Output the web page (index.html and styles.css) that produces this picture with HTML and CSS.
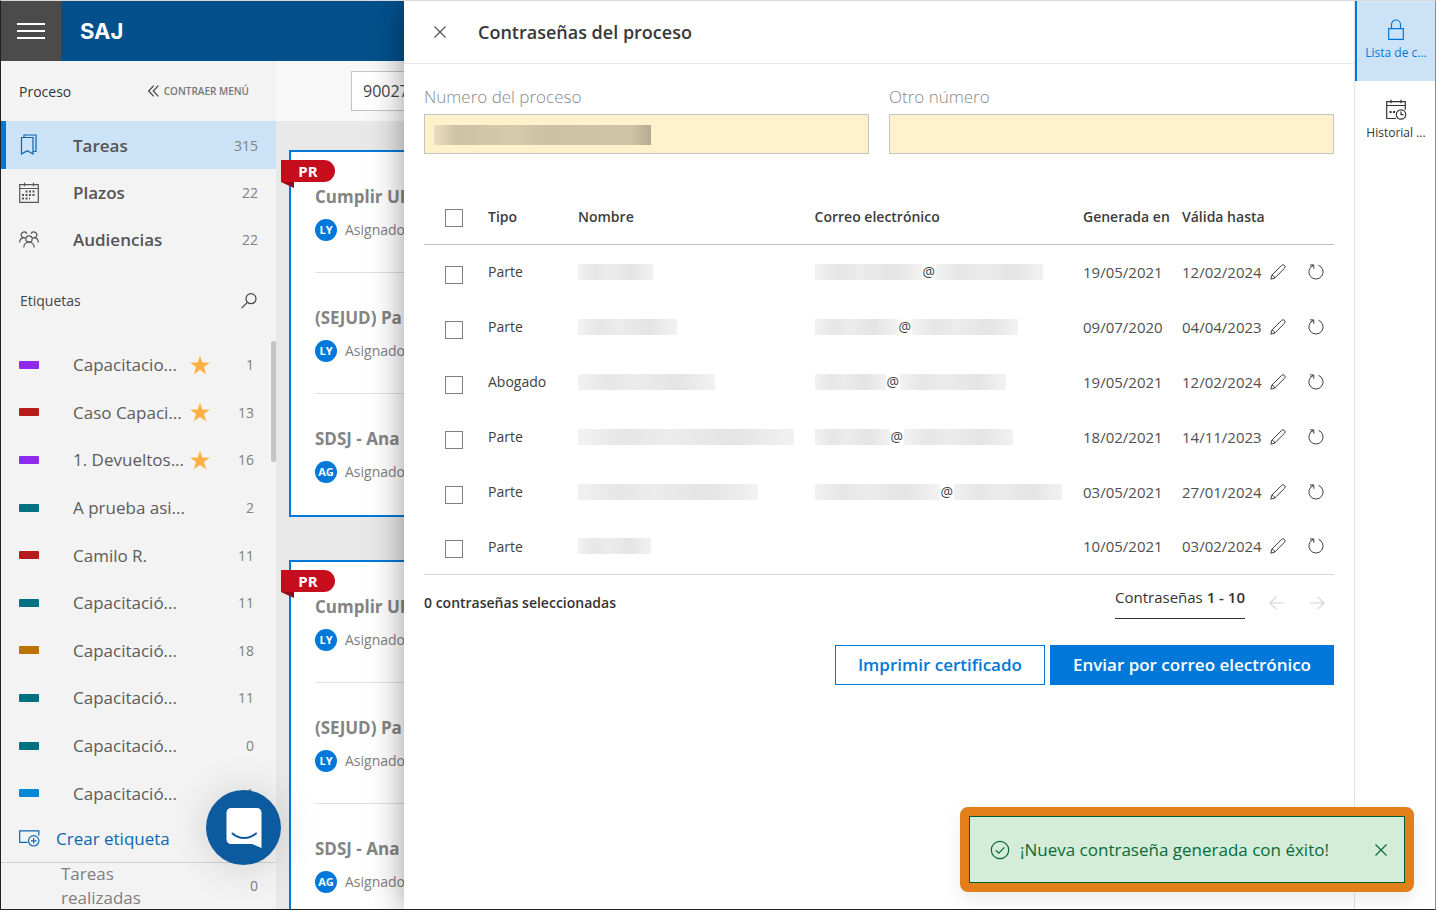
FILE: index.html
```html
<!DOCTYPE html>
<html lang="es">
<head>
<meta charset="utf-8">
<meta name="viewport" content="width=device-width, initial-scale=1">
<title>SAJ - Contraseñas del proceso</title>
<link rel="stylesheet" href="styles.css">
</head>
<body>
<svg width="0" height="0" class="sprite" aria-hidden="true">
  <symbol id="star" viewBox="0 0 20 20"><path fill="#ffb044" d="M10 .5l2.300 7H20l-6.100 4.400 2.300 7.400L10 14.900l-6.200 4.400 2.300-7.400L0 7.500h7.700z"/></symbol>
  <symbol id="pencil" viewBox="0 0 16 16"><path d="M.8 15.200l1-4L11.600 1.400a1.900 1.900 0 0 1 2.900 2.900L4.700 14.100l-3.900 1.100zM1.800 11.300c1.500.2 2.600 1.200 2.900 2.800"/></symbol>
  <symbol id="redo" viewBox="0 0 16 16"><path d="M10.500 1.300A7.100 7.100 0 1 1 5 1.500L2.300 3.300M2 .9h3.800v3.900"/></symbol>
  <symbol id="left" viewBox="0 0 16 14"><path d="M15 7H1M7.500.6L1 7l6.500 6.400"/></symbol>
  <symbol id="right" viewBox="0 0 16 14"><path d="M1 7h14M8.500.6L15 7l-6.500 6.400"/></symbol>
  <symbol id="close" viewBox="0 0 12 12"><path d="M.5.5l11 11M11.500.5l-11 11"/></symbol>
</svg>
<div class="shell">
  <div class="app">
    <header class="topbar">
      <button class="burger" aria-label="Menú"><span></span><span></span><span></span></button>
      <span class="logo">SAJ</span>
    </header>
    <div class="app-body">
      <aside class="sidebar">
        <div class="side-head">
          <span class="side-title">Proceso</span>
          <button class="collapse"><svg class="ico" width="11" height="12" viewBox="0 0 11 12"><path d="M5.700.7L.7 6l5 5.300M10.300.7L5.300 6l5 5.300"/></svg>CONTRAER MENÚ</button>
        </div>
        <nav class="nav">
          <a href="#" class="nav-item active">
            <svg class="ico" width="20" height="22" viewBox="0 0 20 22"><path d="M2.500 3.500h11.500v16.500l-5.700-3.300-5.800 3.300zM5 3.500V1h12v16.500h-3"/></svg>
            <span>Tareas</span><span class="count">315</span></a>
          <a href="#" class="nav-item">
            <svg class="ico" width="20" height="22" viewBox="0 0 20 22"><path d="M.7 2.700h18.600v17.600H.7zM.7 6.500h18.600M5.500.8v3.400M14.500.8v3.400"/><path stroke-width="2" stroke-dasharray="2 1.500" d="M6.500 9.500h10.500M3 13h14M3 16.500h8"/></svg>
            <span>Plazos</span><span class="count">22</span></a>
          <a href="#" class="nav-item">
            <svg class="ico" width="20" height="18" viewBox="0 0 20 18"><circle cx="10" cy="8" r="3.200"/><path d="M4.800 16.500c0-3.200 2.200-5.300 5.200-5.300s5.200 2.100 5.200 5.300M6 6.800A3 3 0 1 1 8 2.800M14 6.800a3 3 0 1 0-2-4M.6 11.500c.2-2.700 1.600-4.500 4-4.800 1 0 1.600.2 2.200.6M19.400 11.500c-.2-2.700-1.600-4.500-4-4.800-1 0-1.600.2-2.200.6"/></svg>
            <span>Audiencias</span><span class="count">22</span></a>
        </nav>
        <div class="tags-head"><span>Etiquetas</span>
          <button class="plain" aria-label="Buscar"><svg class="ico" width="16" height="16" viewBox="0 0 16 16"><circle cx="10" cy="5.700" r="5"/><path d="M6.400 9.300L.6 15.200"/></svg></button></div>
        <ul class="tags">
          <li><i class="purple"></i><span>Capacitacio...</span><svg width="20" height="20"><use href="#star"/></svg><b>1</b></li>
          <li><i class="red"></i><span>Caso Capaci...</span><svg width="20" height="20"><use href="#star"/></svg><b>13</b></li>
          <li><i class="purple"></i><span>1. Devueltos...</span><svg width="20" height="20"><use href="#star"/></svg><b>16</b></li>
          <li><i class="teal"></i><span>A prueba asi...</span><b>2</b></li>
          <li><i class="red"></i><span>Camilo R.</span><b>11</b></li>
          <li><i class="teal"></i><span>Capacitació...</span><b>11</b></li>
          <li><i class="amber"></i><span>Capacitació...</span><b>18</b></li>
          <li><i class="teal"></i><span>Capacitació...</span><b>11</b></li>
          <li><i class="teal"></i><span>Capacitació...</span><b>0</b></li>
          <li><i class="sky"></i><span>Capacitació...</span><b>1</b></li>
        </ul>
        <a href="#" class="create"><svg class="ico" width="21" height="17" viewBox="0 0 21 17"><path d="M8.500 12.300H.7V.8h19.100v4.700"/><circle cx="14.700" cy="10.800" r="5.200"/><path d="M14.700 8v5.600M11.900 10.800h5.600"/></svg>Crear etiqueta</a>
        <a href="#" class="done"><span>Tareas realizadas</span><span class="count">0</span></a>
      </aside>
      <main class="main">
        <div class="toolbar"><input class="search" type="text" value="90027" aria-label="Número de proceso"></div>
        <div class="cards">
          <section class="card">
            <span class="ribbon">PR</span>
            <article><h3>Cumplir UR</h3><p><span class="avatar">LY</span>Asignado</p></article>
            <article><h3>(SEJUD) Pa</h3><p><span class="avatar">LY</span>Asignado</p></article>
            <article><h3>SDSJ - Ana</h3><p><span class="avatar">AG</span>Asignado</p></article>
          </section>
          <section class="card">
            <span class="ribbon">PR</span>
            <article><h3>Cumplir UR</h3><p><span class="avatar">LY</span>Asignado</p></article>
            <article><h3>(SEJUD) Pa</h3><p><span class="avatar">LY</span>Asignado</p></article>
            <article><h3>SDSJ - Ana</h3><p><span class="avatar">AG</span>Asignado</p></article>
          </section>
        </div>
      </main>
    </div>
  </div>

  <div class="drawer">
    <div class="panel">
      <header class="panel-head">
        <button class="plain" aria-label="Cerrar"><svg class="ico" width="12" height="12"><use href="#close"/></svg></button>
        <h2>Contraseñas del proceso</h2>
      </header>
      <div class="panel-body">
        <div class="fields">
          <div class="field"><label for="num">Numero del proceso</label><div class="box"><input id="num" type="text"><span class="mask"></span></div></div>
          <div class="field"><label for="otro">Otro número</label><div class="box"><input id="otro" type="text"></div></div>
        </div>
        <table>
          <colgroup><col class="c-check"><col class="c-type"><col class="c-name"><col class="c-mail"><col class="c-gen"><col class="c-valid"><col class="c-act"></colgroup>
          <thead><tr><th><input type="checkbox" aria-label="Seleccionar todo"></th><th>Tipo</th><th>Nombre</th><th>Correo electrónico</th><th>Generada en</th><th>Válida hasta</th><th></th></tr></thead>
          <tbody>
            <tr><td><input type="checkbox" aria-label="Seleccionar"></td><td>Parte</td><td><span class="blur" style="width:75px"></span></td><td><span class="mail"><span class="blur" style="width:107px"></span>@<span class="blur" style="width:107px"></span></span></td><td class="date">19/05/2021</td><td class="date">12/02/2024</td><td><span class="acts"><button class="plain" aria-label="Editar"><svg class="ico" width="16" height="16"><use href="#pencil"/></svg></button><button class="plain" aria-label="Regenerar"><svg class="ico" width="16" height="16"><use href="#redo"/></svg></button></span></td></tr>
            <tr><td><input type="checkbox" aria-label="Seleccionar"></td><td>Parte</td><td><span class="blur" style="width:99px"></span></td><td><span class="mail"><span class="blur" style="width:83px"></span>@<span class="blur" style="width:106px"></span></span></td><td class="date">09/07/2020</td><td class="date">04/04/2023</td><td><span class="acts"><button class="plain" aria-label="Editar"><svg class="ico" width="16" height="16"><use href="#pencil"/></svg></button><button class="plain" aria-label="Regenerar"><svg class="ico" width="16" height="16"><use href="#redo"/></svg></button></span></td></tr>
            <tr><td><input type="checkbox" aria-label="Seleccionar"></td><td>Abogado</td><td><span class="blur" style="width:137px"></span></td><td><span class="mail"><span class="blur" style="width:71px"></span>@<span class="blur" style="width:106px"></span></span></td><td class="date">19/05/2021</td><td class="date">12/02/2024</td><td><span class="acts"><button class="plain" aria-label="Editar"><svg class="ico" width="16" height="16"><use href="#pencil"/></svg></button><button class="plain" aria-label="Regenerar"><svg class="ico" width="16" height="16"><use href="#redo"/></svg></button></span></td></tr>
            <tr><td><input type="checkbox" aria-label="Seleccionar"></td><td>Parte</td><td><span class="blur" style="width:216px"></span></td><td><span class="mail"><span class="blur" style="width:75px"></span>@<span class="blur" style="width:109px"></span></span></td><td class="date">18/02/2021</td><td class="date">14/11/2023</td><td><span class="acts"><button class="plain" aria-label="Editar"><svg class="ico" width="16" height="16"><use href="#pencil"/></svg></button><button class="plain" aria-label="Regenerar"><svg class="ico" width="16" height="16"><use href="#redo"/></svg></button></span></td></tr>
            <tr><td><input type="checkbox" aria-label="Seleccionar"></td><td>Parte</td><td><span class="blur" style="width:180px"></span></td><td><span class="mail"><span class="blur" style="width:125px"></span>@<span class="blur" style="width:108px"></span></span></td><td class="date">03/05/2021</td><td class="date">27/01/2024</td><td><span class="acts"><button class="plain" aria-label="Editar"><svg class="ico" width="16" height="16"><use href="#pencil"/></svg></button><button class="plain" aria-label="Regenerar"><svg class="ico" width="16" height="16"><use href="#redo"/></svg></button></span></td></tr>
            <tr><td><input type="checkbox" aria-label="Seleccionar"></td><td>Parte</td><td><span class="blur" style="width:73px"></span></td><td></td><td class="date">10/05/2021</td><td class="date">03/02/2024</td><td><span class="acts"><button class="plain" aria-label="Editar"><svg class="ico" width="16" height="16"><use href="#pencil"/></svg></button><button class="plain" aria-label="Regenerar"><svg class="ico" width="16" height="16"><use href="#redo"/></svg></button></span></td></tr>
          </tbody>
        </table>
        <div class="pager">
          <span class="selected">0 contraseñas seleccionadas</span>
          <span class="range">Contraseñas <strong>1 - 10</strong></span>
          <button class="plain" aria-label="Anterior"><svg class="ico" width="16" height="14"><use href="#left"/></svg></button>
          <button class="plain" aria-label="Siguiente"><svg class="ico" width="16" height="14"><use href="#right"/></svg></button>
        </div>
        <div class="buttons">
          <button class="btn">Imprimir certificado</button>
          <button class="btn primary">Enviar por correo electrónico</button>
        </div>
      </div>
    </div>
    <nav class="rail">
      <a href="#" class="active"><svg class="ico" width="18" height="22" viewBox="0 0 18 22"><path d="M1.700 9.700h14.600v10.600H1.700zM4.500 9.700V5.500a4.500 4.500 0 0 1 9 0v4.200"/></svg>Lista de c...</a>
      <a href="#"><svg class="ico" width="22" height="22" viewBox="0 0 22 22"><path d="M11 19.500H1.700V2.700h18.600v8M1.700 6.500h18.600M6 .8v3.400M16 .8v3.400"/><path stroke-width="2" stroke-dasharray="2 1.500" d="M4.500 13h6"/><circle cx="16" cy="15.500" r="4.700"/><path d="M16 12.500v3.200h2.500"/></svg>Historial ...</a>
    </nav>
  </div>
</div>

<button class="chat" aria-label="Chat"><svg width="36" height="42" viewBox="0 0 36 42"><path fill="#fff" d="M5 1h26a4.500 4.500 0 0 1 4.500 4.500V41l-9.500-4H5A4.500 4.500 0 0 1 .5 32.500v-27A4.500 4.500 0 0 1 5 1z"/><path fill="none" stroke="#0c5b9f" stroke-width="2" stroke-linecap="round" d="M6.500 26.500c6.500 6 16.500 6 23.500 0"/></svg></button>

<div class="toast" role="status">
  <div class="toast-in">
    <svg class="ico" width="20" height="20" viewBox="0 0 20 20"><circle cx="10" cy="10" r="8.700"/><path d="M5.800 10.300l3 2.800 5.600-5.800"/></svg>
    <span>¡Nueva contraseña generada con éxito!</span>
    <button class="plain" aria-label="Cerrar aviso"><svg class="ico" width="12" height="12"><use href="#close"/></svg></button>
  </div>
</div>
</body>
</html>
```
FILE: styles.css
```css
* { box-sizing: border-box; }
body {
  margin: 0;
  font-family: "Open Sans", "Noto Sans", sans-serif;
  font-size: 14px;
  color: #333;
  background: #fff;
}
button, input { font-family: inherit; }
a { text-decoration: none; color: inherit; }
h2, h3, p, ul { margin: 0; padding: 0; }
.sprite { position: absolute; }
.ico { fill: none; stroke: currentColor; stroke-width: 1.2; flex: none; display: block; }
.plain { border: 0; padding: 0; background: none; color: inherit; }

.shell {
  height: 100vh;
  display: grid;
  grid-template-columns: 403px minmax(0, 1fr);
  border: 1px solid #222;
  border-top-color: #d9d9d9;
  border-right-color: #8c8c8c;
  overflow: hidden;
}

/* application behind the drawer */
.app { display: flex; flex-direction: column; min-width: 0; min-height: 0; overflow: hidden; }
.topbar { flex: none; height: 60px; display: flex; align-items: center; background: #03508c; }
.burger {
  width: 60px; height: 60px; border: 0; padding: 0;
  background: #4b4b4b;
  display: flex; flex-direction: column; align-items: center; justify-content: center; gap: 5px;
}
.burger span { width: 28px; height: 2px; background: #fff; }
.logo { margin-left: 19px; color: #fff; font-family: Inter, "Open Sans", sans-serif; font-size: 22px; font-weight: 700; }
.app-body { flex: 1; min-height: 0; display: flex; }

.sidebar { width: 275px; flex: none; display: flex; flex-direction: column; background: #f3f3f3; overflow: hidden; }
.side-head { flex: none; height: 60px; padding: 0 27px 0 18px; display: flex; align-items: center; justify-content: space-between; }
.side-title { font-weight: 500; }
.collapse { border: 0; padding: 0; background: none; display: flex; align-items: center; gap: 5px; font-size: 10px; font-weight: 600; color: #777; }
.collapse .ico { color: #444; }
.nav-item {
  height: 47px; padding: 0 18px;
  display: flex; align-items: center; gap: 34px;
  font-size: 17px; font-weight: 600; color: #555;
}
.nav-item.active { height: 48px; background: #cce3f7; box-shadow: inset 5px 0 #0078d9; }
.nav-item.active .ico { color: #0a62ac; }
.count { margin-left: auto; font-size: 14px; font-weight: 400; color: #808080; }
.tags-head { flex: none; height: 78px; padding: 0 19px 3px; display: flex; align-items: center; justify-content: space-between; font-weight: 500; color: #444; }
.tags { flex: 1; min-height: 0; list-style: none; display: grid; grid-auto-rows: 1fr; position: relative; }
.tags::after { content: ""; position: absolute; right: 0; top: 0; width: 5px; height: 121px; border-radius: 2px; background: #c4c4c4; }
.tags li { display: grid; grid-template-columns: 20px 125px 20px 1fr; column-gap: 13px; align-items: center; padding: 0 22px 0 18px; }
.tags span { padding-left: 21px; font-size: 17px; color: #5c5c5c; white-space: nowrap; }
.tags b { grid-column: 4; text-align: right; font-size: 14px; font-weight: 400; color: #808080; }
.tags i { width: 20px; height: 8px; border-radius: 1px; }
.purple { background: #9029ee; }
.red { background: #b71a1a; }
.teal { background: #007180; }
.amber { background: #ba7400; }
.sky { background: #0088d4; }
.create { flex: none; height: 46px; padding: 0 18px 2px; display: flex; align-items: center; gap: 16px; font-size: 17px; color: #0a66b2; border-bottom: 1px solid #d2d2d2; }
.done { flex: none; height: 46px; padding: 0 18px 0 60px; display: flex; align-items: center; font-size: 17px; line-height: 24px; color: #808080; }
.done span:first-child { width: 90px; }

.main { flex: 1; min-width: 0; display: flex; flex-direction: column; background: #e8e8e8; overflow: hidden; }
.toolbar { flex: none; height: 60px; padding: 10px 0 0 75px; background: #f8f8f8; }
.search { width: 220px; height: 40px; padding: 0 11px; border: 1px solid #c4c4c4; background: #fff; font-size: 16px; color: #444; }
.cards { padding: 29px 0 0 13px; display: flex; flex-direction: column; gap: 43px; }
.card { position: relative; width: 480px; height: 367px; border: 2px solid #0078d9; background: #fff; padding: 0 24px; }
.card article { height: 121px; padding-top: 33px; border-bottom: 1px solid #e0e0e0; }
.card article:last-child { border: 0; }
.card h3 { font-size: 17px; line-height: 24px; font-weight: 700; color: #848484; }
.card p { display: flex; align-items: center; gap: 8px; margin-top: 9px; height: 23px; color: #808080; }
.avatar { width: 22px; height: 22px; border-radius: 50%; background: #0078d9; color: #fff; font-size: 11px; font-weight: 700; display: grid; place-items: center; }
.ribbon {
  position: absolute; left: -10px; top: 8px;
  width: 54px; height: 22px; border-radius: 0 11px 11px 0;
  background: #c50d1e; color: #fff; font-size: 15px; font-weight: 700; line-height: 22px; text-align: center;
}
.ribbon::after { content: ""; position: absolute; left: 0; top: 22px; width: 13px; height: 6px; background: #920a12; clip-path: polygon(0 0, 100% 0, 100% 100%); }

/* drawer */
.drawer { position: relative; z-index: 1; display: flex; min-height: 0; background: #fff; box-shadow: 0 0 32px rgba(0, 0, 0, .4); }
.panel { flex: 1; min-width: 0; }
.panel-head { height: 63px; padding: 0 30px; display: flex; align-items: center; gap: 32px; border-bottom: 1px solid #e6e6e6; color: #555; }
.panel-head h2 { font-size: 18px; font-weight: 600; color: #383838; }
.panel-body { padding: 20px; }
.fields { display: grid; grid-template-columns: 1fr 1fr; gap: 20px; }
.field label { display: block; height: 30px; line-height: 26px; font-size: 17px; font-weight: 300; color: #888; }
.box { position: relative; }
.box input { display: block; width: 100%; height: 40px; padding: 0 10px; border: 1px solid #c4c4c4; background: #fff1cc; font-size: 16px; }
.mask { position: absolute; left: 10px; top: 11px; width: 217px; height: 20px; background: linear-gradient(90deg, #eadfbe, #cdc3a4 10%, #d5cbab 38%, #cbc1a3 52%, #cfc5a6 90%, #b5ab91); }

table { width: 100%; table-layout: fixed; border-collapse: collapse; margin-top: 37px; border-bottom: 1px solid #d6d6d6; }
.c-check { width: 64px; }
.c-type { width: 90px; }
.c-name { width: 26%; }
.c-gen { width: 99px; }
.c-valid { width: 88px; }
.c-act { width: 64px; }
th { height: 53px; padding: 0 0 2px; text-align: left; font-weight: 600; color: #3c3c3c; border-bottom: 1px solid #c0c0c0; white-space: nowrap; }
td { height: 55px; padding: 0; color: #404040; white-space: nowrap; }
.date { font-size: 15px; color: #505050; }
th:first-child, td:first-child { padding: 6px 0 0 21px; }
th:first-child { padding-top: 2px; }
input[type="checkbox"] { appearance: none; display: block; width: 18px; height: 18px; margin: 0; border: 1px solid #808080; background: #fff; }
.blur { display: block; height: 16px; background: linear-gradient(90deg, #f2f2f2, #e6e6e6 22%, #ececec 42%, #e4e4e4 72%, #f2f2f2); }
.mail { display: flex; align-items: center; gap: 1px; line-height: 20px; }
.acts { display: flex; justify-content: space-between; padding-right: 10px; }
.acts .ico { stroke-width: 1; }

.pager { display: flex; align-items: center; height: 56px; padding-right: 9px; }
.selected { flex: 1; font-weight: 600; }
.range { height: 32px; line-height: 20px; font-size: 15px; border-bottom: 1px solid #333; }
.range strong { font-weight: 600; }
.pager button { margin-left: 24px; color: #d4d4d4; }
.buttons { display: flex; justify-content: flex-end; gap: 5px; margin-top: 14px; }
.btn { height: 40px; padding: 0 22px; border: 1px solid #0078d9; background: #fff; color: #0078d9; font-size: 17px; font-weight: 600; }
.primary { background: #0078d9; color: #fff; }

.rail { width: 81px; flex: none; border-left: 1px solid #e2e2e2; }
.rail a { height: 80px; display: flex; flex-direction: column; align-items: center; justify-content: center; gap: 3px; padding: 0 0 2px 2px; font-size: 12px; line-height: 17px; }
.rail .active { background: #cce3f7; color: #0078d9; box-shadow: inset 2px 0 #0078d9; }

.chat { position: fixed; left: 206px; bottom: 45px; z-index: 2; width: 75px; height: 75px; border: 0; border-radius: 50%; padding: 0; display: grid; place-items: center; background: #0c5b9f; box-shadow: 0 2px 40px rgba(0, 0, 0, .15); }

.toast { position: fixed; right: 22px; bottom: 18px; z-index: 3; width: 454px; border: 9px solid #e37f1b; border-radius: 8px; background: #e37f1b; box-shadow: 0 8px 20px rgba(0, 0, 0, .08); }
.toast-in { height: 67px; padding: 0 17px 0 20px; display: flex; align-items: center; gap: 10px; border: 1px solid #00602b; background: #d4ecda; color: #0b6b35; font-size: 17px; }
.toast span { flex: 1; white-space: nowrap; }
```
